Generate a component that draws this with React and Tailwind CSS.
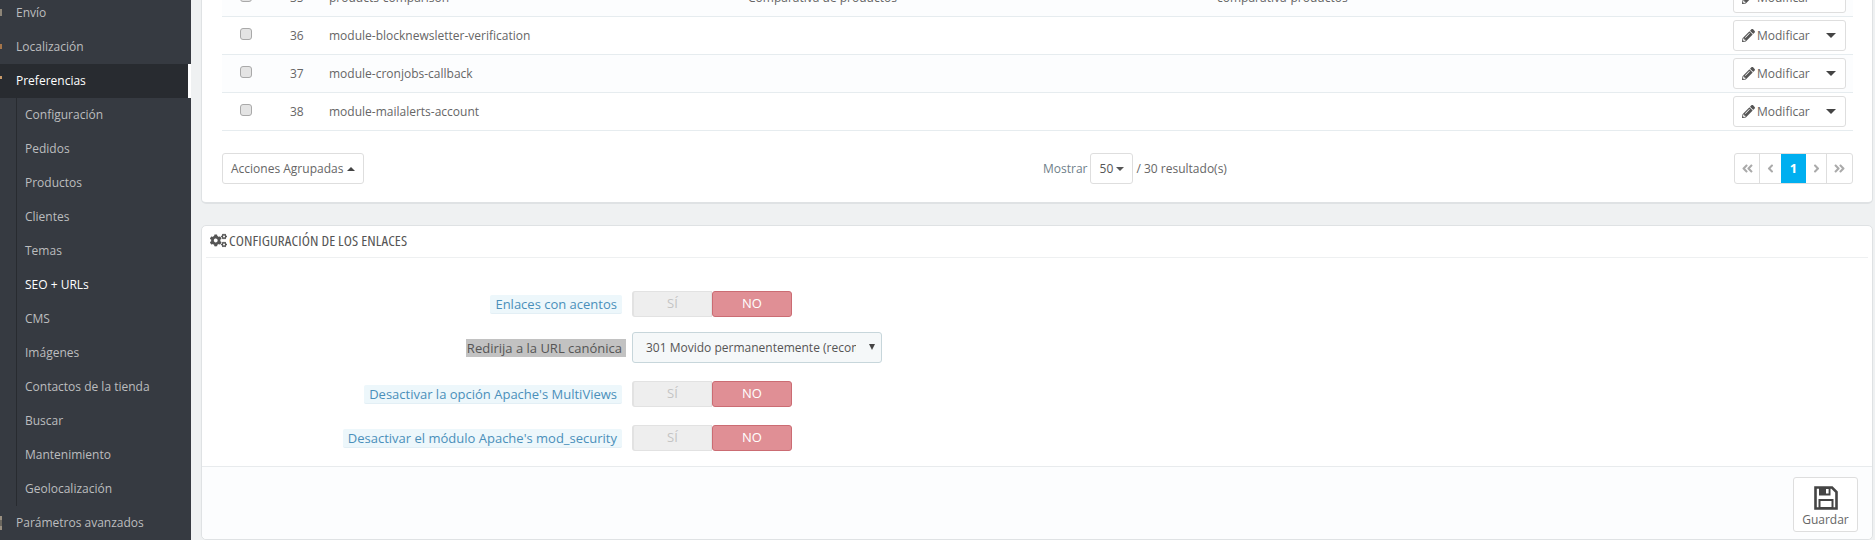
import { FaPencilAlt, FaCogs, FaAngleDoubleLeft, FaAngleDoubleRight, FaAngleLeft, FaAngleRight } from 'react-icons/fa';

const subItems = ['Configuración', 'Pedidos', 'Productos', 'Clientes', 'Temas', 'SEO + URLs', 'CMS', 'Imágenes', 'Contactos de la tienda', 'Buscar', 'Mantenimiento', 'Geolocalización'];

const rows = [
  { id: 35, name: 'products-comparison', title: 'Comparativa de productos', url: 'comparativa-productos', tint: true },
  { id: 36, name: 'module-blocknewsletter-verification', title: '', url: '' },
  { id: 37, name: 'module-cronjobs-callback', title: '', url: '', tint: true },
  { id: 38, name: 'module-mailalerts-account', title: '', url: '' },
];

function Sidebar() {
  return (
    <aside className="w-[191px] shrink-0 h-[540px] overflow-hidden bg-[#363a41] text-[12px] text-[#bcbdbf]">
      <div className="-mt-1">
        <div className="h-[34px] pl-[16px] flex items-center relative">
          <span className="absolute left-0 top-[13px] w-[2px] h-[7px] bg-[#8d8578]"></span>
          Envío
        </div>
        <div className="h-[34px] pl-[16px] flex items-center relative">
          <span className="absolute left-0 top-[14px] w-[2px] h-[5px] bg-[#a5754a]"></span>
          Localización
        </div>
        <div className="h-[34px] pl-[16px] flex items-center relative bg-[#282b30] text-white border-r-[3px] border-white">
          <span className="absolute left-0 top-[12px] w-[2px] h-[3px] bg-[#c89a6a]"></span>
          Preferencias
        </div>
        <div className="ml-4 border-l border-[#282b30]">
          {subItems.map((item) => (
            <div key={item} className={`h-[34px] pl-2 flex items-center ${item === 'SEO + URLs' ? 'text-white' : ''}`}>{item}</div>
          ))}
        </div>
        <div className="h-[34px] pl-[16px] flex items-center relative">
          <span className="absolute left-0 top-[10px] w-[2px] h-[14px] border-y-[4px] border-[#9a8f80] bg-[#6b675f]"></span>
          Parámetros avanzados
        </div>
      </div>
    </aside>
  );
}

function Caret({ up }) {
  return <span className={`inline-block border-x-4 border-x-transparent ${up ? 'border-b-4 border-b-[#444]' : 'border-t-4 border-t-[#555]'}`}></span>;
}

function TableRow({ row }) {
  return (
    <div className={`h-[38px] border-b border-[#e6ecef] grid grid-cols-[68px_39px_419px_469px_1fr_auto] items-center pr-[7px] ${row.tint ? 'bg-[#fcfdfe]' : 'bg-white'}`}>
      <span className="ml-[18px] mb-[4px] w-3 h-3 rounded-[3px] bg-[#e4e4e4] border border-[#a9a9a9]"></span>
      <span>{row.id}</span>
      <span>{row.name}</span>
      <span>{row.title}</span>
      <span>{row.url}</span>
      <div className="w-[113px] h-[31px] border border-[#dedede] rounded-[3px] bg-white flex items-center pl-2 text-[#666]">
        <FaPencilAlt className="text-[13px] text-[#555] mr-[2px]" />
        <span>Modificar</span>
        <span className="ml-auto mr-[9px] flex"><span className="inline-block border-x-[5px] border-x-transparent border-t-[5px] border-t-[#444]"></span></span>
      </div>
    </div>
  );
}

function Pagination() {
  const cell = 'h-full flex items-center justify-center text-[#aaa] text-[13px]';
  return (
    <div className="h-[31px] flex border border-[#dedede] rounded-[3px] bg-white">
      <span className={`${cell} w-[25px] border-r border-[#dedede]`}><FaAngleDoubleLeft /></span>
      <span className={`${cell} w-[21px]`}><FaAngleLeft /></span>
      <span className={`${cell} w-[25px] bg-[#00aff0] font-bold text-white`}>1</span>
      <span className={`${cell} w-[21px] border-r border-[#dedede]`}><FaAngleRight /></span>
      <span className={`${cell} w-[25px]`}><FaAngleDoubleRight /></span>
    </div>
  );
}

function Toggle() {
  return (
    <div className="flex w-[160px] h-[26px] text-[13px]">
      <div className="w-[80px] bg-[#eeeeee] border border-[#e2e2e2] border-l-2 rounded-l-[3px] text-[#c4c4c4] flex items-center justify-center">SÍ</div>
      <div className="w-[80px] bg-[#e08f95] border border-[#cb6c73] rounded-[3px] text-white flex items-center justify-center">NO</div>
    </div>
  );
}

function FormRow({ label, mark, className, children }) {
  return (
    <div className={`flex items-center gap-[10px] ${className}`}>
      <div className="w-[420px] flex justify-end text-[13px]">
        {mark ? (
          <span className="h-[18px] -mr-1 pr-1 pl-[1px] leading-[18px] bg-[#c2c2c2] text-[#555]">{label}</span>
        ) : (
          <span className="h-[19px] px-[5px] leading-[18px] rounded-[2px] bg-[#edf7fb] border-b border-[#e3eff5] text-[#4a8fba]">{label}</span>
        )}
      </div>
      {children}
    </div>
  );
}

function SaveIcon() {
  return (
    <svg width="24" height="24" viewBox="0 0 24 24" className="shrink-0">
      <path d="M1.5 1.5H18L22.5 6V22.5H1.5Z" fill="none" stroke="#444" strokeWidth="2.6" />
      <path d="M5 2H16.5V9.5H5Z" fill="#444" />
      <rect x="12" y="3" width="2.6" height="4.5" fill="#fff" />
      <rect x="5.5" y="14" width="13" height="8" fill="none" stroke="#444" strokeWidth="2" />
    </svg>
  );
}

export default function App() {
  return (
    <div className="flex h-[540px] overflow-hidden bg-[#eff1f2] text-[12px] text-[#666] font-['Open_Sans',sans-serif]">
      <Sidebar />
      <main className="flex-1 min-w-0 pl-[10px] pr-[2px]">
        <section className="-mt-[22px] h-[226px] bg-white border border-[#dfe2e4] border-b-2 rounded-[5px] px-[20px] pr-[19px]">
          {rows.map((row) => <TableRow key={row.id} row={row} />)}
          <div className="mt-[22px] flex items-center justify-between relative">
            <div className="w-[142px] h-[31px] border border-[#dedede] rounded-[3px] flex items-center gap-1 pl-2">
              Acciones Agrupadas <Caret up />
            </div>
            <div className="absolute left-[821px] flex items-center">
              <span className="text-[#6f7f8a]">Mostrar</span>
              <span className="ml-[3px] w-[43px] h-[31px] border border-[#dedede] rounded-[3px] flex items-center justify-center gap-[3px] text-[#555]">50 <Caret /></span>
              <span className="ml-[3px]">/ 30 resultado(s)</span>
            </div>
            <Pagination />
          </div>
        </section>

        <section className="mt-[21px] h-[315px] bg-white border border-[#dfe2e4] rounded-[5px] flex flex-col">
          <div className="mx-1 h-[32px] pb-[2px] border-b border-[#eef0f1] flex items-center gap-[2px] pl-[4px] text-[#555]">
            <FaCogs className="text-[17px]" />
            <span className="text-[15px] uppercase tracking-[0.1px] [font-stretch:75%] whitespace-nowrap">Configuración de los enlaces</span>
          </div>

          <div className="pt-[33px] pb-[15px]">
            <FormRow label="Enlaces con acentos"><Toggle /></FormRow>
            <FormRow label="Redirija a la URL canónica" mark className="mt-[15px]">
              <div className="w-[250px] h-[31px] bg-[#f5f8f9] border border-[#c7d6db] rounded-[3px] flex items-center pl-[13px] text-[#555] relative">
                <span className="w-[210px] overflow-hidden whitespace-nowrap">301 Movido permanentemente (recomendado)</span>
                <span className="absolute right-[6px] top-[11px] border-x-[3px] border-x-transparent border-t-[6px] border-t-[#444]"></span>
              </div>
            </FormRow>
            <FormRow label="Desactivar la opción Apache's MultiViews" className="mt-[18px]"><Toggle /></FormRow>
            <FormRow label="Desactivar el módulo Apache's mod_security" className="mt-[18px]"><Toggle /></FormRow>
          </div>

          <div className="flex-1 bg-[#fcfdfe] border-t border-[#e8ebed] flex justify-end pt-[10px] pr-[14px] rounded-b-[5px]">
            <div className="w-[65px] h-[55px] bg-white border border-[#dedede] rounded-[3px] flex flex-col items-center pt-2 text-[#666]">
              <SaveIcon />
              <span className="mt-[1px]">Guardar</span>
            </div>
          </div>
        </section>
      </main>
    </div>
  );
}
